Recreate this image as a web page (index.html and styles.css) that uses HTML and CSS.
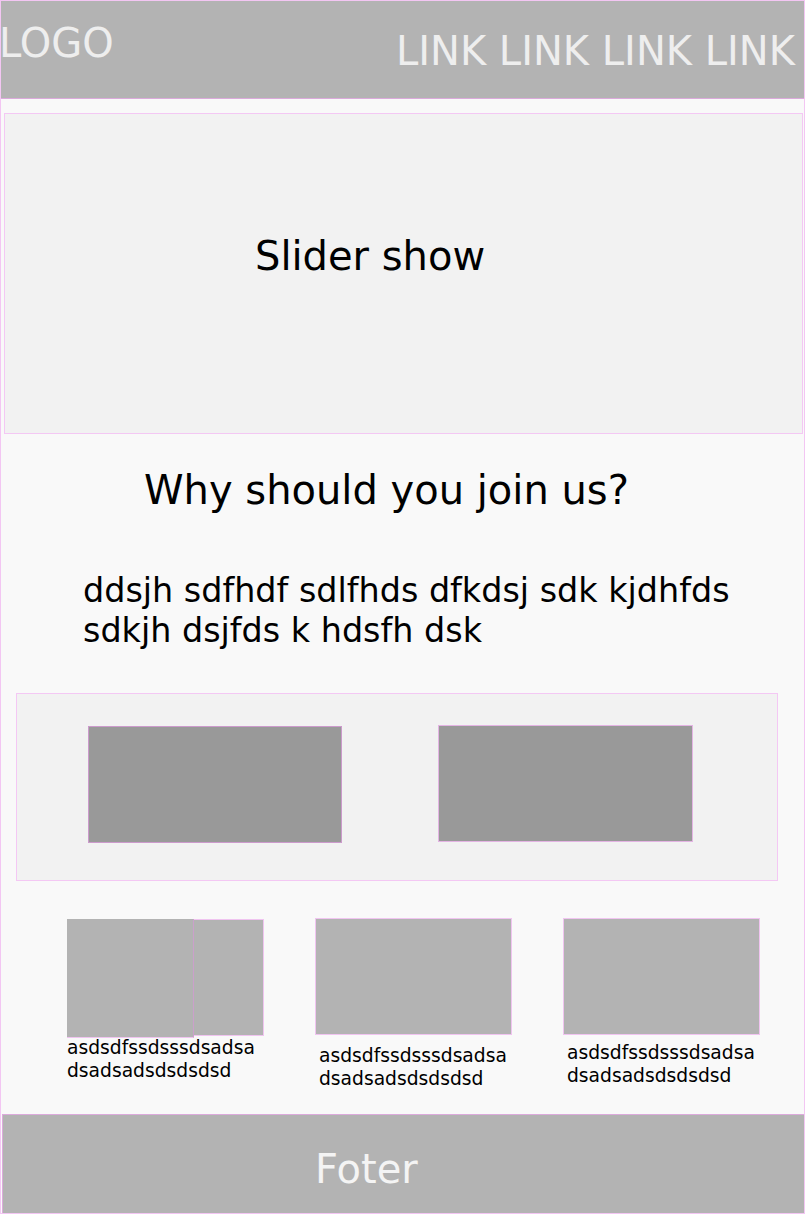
FILE: index.html
```html
<!DOCTYPE html>
<html>
<head>
<meta charset="utf-8">
<title>Wireframe</title>
<link rel="stylesheet" href="styles.css">
</head>
<body>
<div class="page">
  <header class="header">
    <div class="logo">LOGO</div>
    <nav class="nav">LINK LINK LINK LINK</nav>
  </header>
  <section class="slider"><span class="slider-text">Slider show</span></section>
  <h1 class="heading">Why should you join us?</h1>
  <p class="intro">ddsjh sdfhdf sdlfhds dfkdsj sdk kjdhfds<br>sdkjh dsjfds k hdsfh dsk</p>
  <section class="panel">
    <div class="box"></div>
    <div class="box box-two"></div>
  </section>
  <section class="cards">
    <div class="card card-one">
      <div class="thumb"><div class="thumb-inner"></div></div>
      <p class="caption">asdsdfssdsssdsadsa<br>dsadsadsdsdsdsd</p>
    </div>
    <div class="card card-two">
      <div class="thumb"></div>
      <p class="caption">asdsdfssdsssdsadsa<br>dsadsadsdsdsdsd</p>
    </div>
    <div class="card card-three">
      <div class="thumb"></div>
      <p class="caption">asdsdfssdsssdsadsa<br>dsadsadsdsdsdsd</p>
    </div>
  </section>
  <footer class="footer"><span class="footer-text">Foter</span></footer>
</div>
</body>
</html>
```
FILE: styles.css
```css
* { box-sizing: border-box; }
html, body { margin: 0; padding: 0; background: #f9f9f9; }
body { font-family: "DejaVu Sans", sans-serif; }

.page {
  width: 805px;
  height: 1214px;
  border: 1px solid #f3c6f3;
  background: #f9f9f9;
  display: flex;
  flex-direction: column;
  overflow: hidden;
}

.header {
  height: 98px;
  background: #b3b3b3;
  border-bottom: 1px solid #dcaadc;
  display: flex;
  justify-content: space-between;
  align-items: flex-start;
  padding-right: 9px;
  color: #eeeeee;
  font-size: 40px;
  line-height: 40px;
}
.logo { margin-top: 22px; margin-left: -2px; }
.nav { margin-top: 30px; }

.slider {
  margin: 14px 0 0 3px;
  width: 799px;
  height: 321px;
  background: #f2f2f2;
  border: 1px solid #f4c8f4;
  padding: 122px 0 0 250px;
  font-size: 40px;
  line-height: 40px;
  color: #000;
}

.heading {
  margin: 36px 0 0 143px;
  font-weight: normal;
  font-size: 40px;
  line-height: 40px;
  color: #000;
}

.intro {
  margin: 61px 0 0 82px;
  font-size: 33.4px;
  line-height: 40px;
  color: #000;
}

.panel {
  margin: 42px 0 0 15px;
  width: 762px;
  height: 188px;
  background: #f2f2f2;
  border: 1px solid #f4c8f4;
  display: flex;
  align-items: flex-start;
  gap: 96px;
  padding: 32px 0 0 71px;
}
.box {
  width: 254px;
  height: 117px;
  background: #999999;
  border: 1px solid #cc9acc;
}
.box-two { width: 255px; margin-top: -1px; border-color: #e4b4e4; }

.cards {
  margin: 37px 0 0 66px;
  display: flex;
  align-items: flex-start;
  gap: 51px;
}
.card { width: 197px; }
.thumb {
  height: 117px;
  background: #b3b3b3;
  border: 1px solid #f0c4f0;
  display: flex;
}
.card-one .thumb { margin-top: 1px; }
.thumb-inner {
  width: 127px;
  height: 119px;
  margin: -1px 0 0 -1px;
  background: #b3b3b3;
  border-right: 1px solid #cba0cb;
  border-bottom: 1px solid #f0c4f0;
}
.caption {
  margin: 0;
  font-size: 18.7px;
  line-height: 22.5px;
  color: #000;
  white-space: nowrap;
}
.card-one .caption { margin-top: 1px; padding-left: 0; }
.card-two .caption { margin-top: 10px; padding-left: 4px; }
.card-three .caption { margin-top: 7px; padding-left: 4px; }

.footer {
  margin-top: auto;
  margin-left: 1px;
  height: 99px;
  background: #b3b3b3;
  border-top: 1px solid #dcaadc;
  border-left: 1px solid #dcaadc;
  padding: 34px 0 0 312px;
  font-size: 40px;
  line-height: 40px;
  color: #f4f4f4;
}
```
